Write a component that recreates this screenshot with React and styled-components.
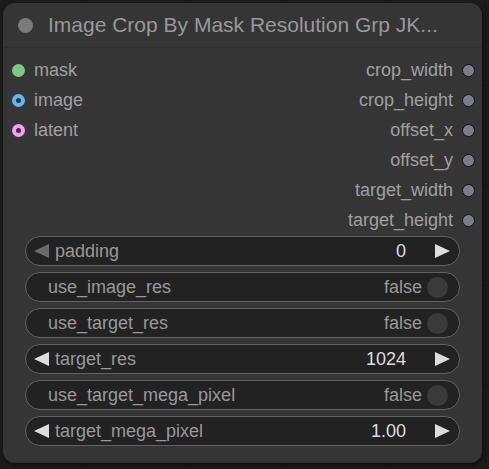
import styled, { createGlobalStyle } from "styled-components";

const GlobalStyle = createGlobalStyle`
  html, body {
    margin: 0;
    padding: 0;
    background: #1b1b1b;
  }
  body {
    font-family: "Liberation Sans", Arial, sans-serif;
  }
`;

const Canvas = styled.div`
  width: 489px;
  height: 469px;
  padding: 3px;
  box-sizing: border-box;
  background-color: #1b1b1b;
  background-image:
    linear-gradient(#151515 1px, transparent 1px),
    linear-gradient(90deg, #151515 1px, transparent 1px);
  background-size: 100px 100px;
  background-position: -15px -15px;
`;

const Node = styled.div`
  width: 479px;
  height: 460px;
  background: #353535;
  border-radius: 12px;
  box-shadow: 1px 2px 4px rgba(0, 0, 0, 0.5);
  display: flex;
  flex-direction: column;
  overflow: hidden;
`;

const TitleBar = styled.div`
  height: 45px;
  flex: none;
  display: flex;
  align-items: center;
  gap: 15px;
  padding-left: 15px;
  border-bottom: 1px solid #2e2e2e;
  box-sizing: border-box;
  color: #999;
  font-size: 21px;
  white-space: nowrap;
`;

const TitleDot = styled.span`
  width: 15px;
  height: 15px;
  border-radius: 50%;
  background: #7a7a7a;
  flex: none;
`;

const Slots = styled.div`
  display: grid;
  grid-template-columns: 1fr 1fr;
  padding: 7px 0 1px;
`;

const SlotColumn = styled.div`
  display: flex;
  flex-direction: column;
`;

const SlotRow = styled.div`
  height: 30px;
  display: flex;
  align-items: center;
  gap: 9px;
  font-size: 18px;
  color: #a0a0a0;
  justify-content: ${(p) => (p.$out ? "flex-end" : "flex-start")};
  padding: ${(p) => (p.$out ? "0 7px 0 0" : "0 0 0 9px")};
`;

const SlotDot = styled.span`
  width: 13px;
  height: 13px;
  border-radius: 50%;
  box-sizing: border-box;
  flex: none;
  background: ${(p) => p.$color};
  border: ${(p) => (p.$out ? "1px solid #111" : "none")};
  display: flex;
  align-items: center;
  justify-content: center;

  &::after {
    content: "";
    display: ${(p) => (p.$ring ? "block" : "none")};
    width: 5px;
    height: 5px;
    border-radius: 50%;
    background: #353535;
  }
`;

const Widgets = styled.div`
  display: flex;
  flex-direction: column;
  gap: 6px;
  padding: 0 22px;
`;

const Widget = styled.div`
  height: 30px;
  box-sizing: border-box;
  border: 1.5px solid #626262;
  border-radius: 15px;
  background: #222;
  display: flex;
  align-items: center;
  font-size: 18px;
  color: #999;
  padding: ${(p) => (p.$toggle ? "0 11px 0 22px" : "0 9px 0 8px")};
`;

const Arrow = styled.span`
  width: 0;
  height: 0;
  flex: none;
  border-top: 7px solid transparent;
  border-bottom: 7px solid transparent;
  ${(p) =>
    p.$right
      ? `border-left: 15px solid ${p.$dim ? "#6a6a6a" : "#ddd"};`
      : `border-right: 15px solid ${p.$dim ? "#6a6a6a" : "#ddd"};`}
`;

const Label = styled.span`
  flex: 1;
  margin-left: ${(p) => (p.$toggle ? "0" : "6px")};
`;

const Value = styled.span`
  color: ${(p) => (p.$toggle ? "#999" : "#ddd")};
  margin-right: ${(p) => (p.$toggle ? "5px" : "29px")};
`;

const Knob = styled.span`
  width: 21px;
  height: 21px;
  border-radius: 50%;
  background: #3a3a3a;
  flex: none;
`;

const inputs = [
  { name: "mask", color: "#81c784" },
  { name: "image", color: "#64b5f6", ring: true },
  { name: "latent", color: "#ff9cf9", ring: true },
];

const outputs = [
  "crop_width",
  "crop_height",
  "offset_x",
  "offset_y",
  "target_width",
  "target_height",
];

const widgets = [
  { name: "padding", value: "0", min: true },
  { name: "use_image_res", value: "false", toggle: true },
  { name: "use_target_res", value: "false", toggle: true },
  { name: "target_res", value: "1024" },
  { name: "use_target_mega_pixel", value: "false", toggle: true },
  { name: "target_mega_pixel", value: "1.00" },
];

function NumberWidget({ w }) {
  return (
    <Widget>
      <Arrow $dim={w.min} />
      <Label>{w.name}</Label>
      <Value>{w.value}</Value>
      <Arrow $right />
    </Widget>
  );
}

function ToggleWidget({ w }) {
  return (
    <Widget $toggle>
      <Label $toggle>{w.name}</Label>
      <Value $toggle>{w.value}</Value>
      <Knob />
    </Widget>
  );
}

export default function App() {
  return (
    <>
      <GlobalStyle />
      <Canvas>
        <Node>
          <TitleBar>
            <TitleDot />
            Image Crop By Mask Resolution Grp JK...
          </TitleBar>
          <Slots>
            <SlotColumn>
              {inputs.map((s) => (
                <SlotRow key={s.name}>
                  <SlotDot $color={s.color} $ring={s.ring} />
                  {s.name}
                </SlotRow>
              ))}
            </SlotColumn>
            <SlotColumn>
              {outputs.map((name) => (
                <SlotRow key={name} $out>
                  {name}
                  <SlotDot $color="#7c7c8c" $out />
                </SlotRow>
              ))}
            </SlotColumn>
          </Slots>
          <Widgets>
            {widgets.map((w) =>
              w.toggle ? (
                <ToggleWidget key={w.name} w={w} />
              ) : (
                <NumberWidget key={w.name} w={w} />
              )
            )}
          </Widgets>
        </Node>
      </Canvas>
    </>
  );
}
